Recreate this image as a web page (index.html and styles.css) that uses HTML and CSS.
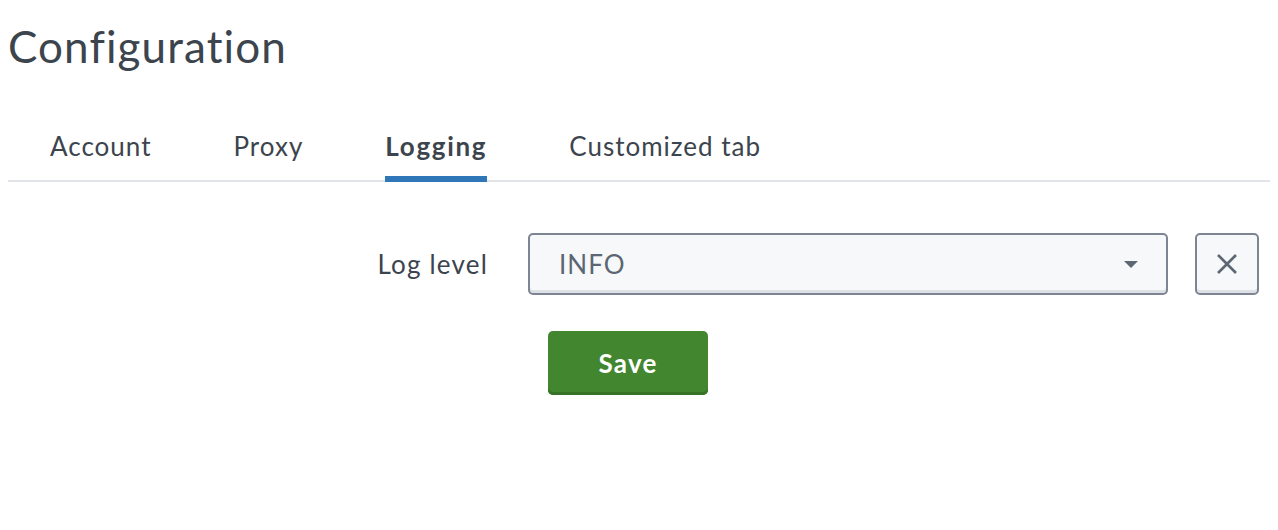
FILE: index.html
```html
<!DOCTYPE html>
<html>
<head>
<meta charset="utf-8">
<link rel="stylesheet" href="styles.css">
</head>
<body>
<h1 class="title">Configuration</h1>
<nav class="tabs">
  <a class="tab">Account</a>
  <a class="tab">Proxy</a>
  <a class="tab active">Logging</a>
  <a class="tab">Customized tab</a>
</nav>
<form class="form">
  <div class="row">
    <label class="label">Log level</label>
    <div class="select">
      <span class="value">INFO</span>
      <svg class="caret" width="14" height="7" viewBox="0 0 14 7"><path d="M0 0H14L7 7Z" fill="#5c6773"/></svg>
    </div>
    <button type="button" class="clear">
      <svg width="20" height="20" viewBox="0 0 20 20"><path d="M1 1L19 19M19 1L1 19" stroke="#5c6773" stroke-width="2.6" fill="none"/></svg>
    </button>
  </div>
  <div class="actions">
    <button type="button" class="save">Save</button>
  </div>
</form>
</body>
</html>
```
FILE: styles.css
```css
body {
  margin: 8px;
  font-family: Lato, "Open Sans", sans-serif;
  color: #3c444d;
  background: #fff;
}
.title {
  margin: 12px 0 0 0;
  font-size: 44px;
  font-weight: 400;
  line-height: 53px;
  letter-spacing: 1.1px;
}
.tabs {
  display: flex;
  gap: 82px;
  margin-top: 58px;
  padding-left: 42px;
  border-bottom: 2px solid #e1e4e8;
}
.tab {
  position: relative;
  font-size: 26px;
  line-height: 31px;
  padding-bottom: 18px;
  color: #3c444d;
  letter-spacing: 1px;
}
.tab.active {
  font-weight: 700;
  letter-spacing: 1.7px;
}
.tab.active::after {
  content: "";
  position: absolute;
  left: 0;
  right: 0;
  bottom: -2px;
  height: 6px;
  background: #2f77b8;
}
.form {
  margin-top: 51px;
}
.row {
  display: grid;
  grid-template-columns: 480px 640px 64px;
  column-gap: 40px;
  align-items: center;
}
.label {
  font-size: 26px;
  text-align: right;
  letter-spacing: 1.2px;
}
.select {
  height: 62px;
  box-sizing: border-box;
  border: 2px solid #7c8591;
  border-radius: 5px;
  background: #f7f8fa;
  box-shadow: inset 0 -3px 0 #dde0e5;
  display: flex;
  align-items: center;
  justify-content: space-between;
  padding: 0 28px 0 29px;
  font-size: 26px;
  color: #5c6773;
  letter-spacing: 1px;
}
.clear {
  margin-left: -13px;
  width: 64px;
  height: 62px;
  box-sizing: border-box;
  border: 2px solid #7c8591;
  border-radius: 5px;
  background: #f7f8fa;
  box-shadow: inset 0 -3px 0 #dde0e5;
  display: flex;
  align-items: center;
  justify-content: center;
  padding: 0;
}
.actions {
  margin-top: 36px;
  padding-left: 540px;
}
.save {
  width: 160px;
  height: 64px;
  border: none;
  border-radius: 5px;
  background: #42862f;
  box-shadow: inset 0 -3px 0 #387226;
  color: #fff;
  font-family: Lato, "Open Sans", sans-serif;
  font-size: 26px;
  font-weight: 700;
  letter-spacing: 1.2px;
}
```
